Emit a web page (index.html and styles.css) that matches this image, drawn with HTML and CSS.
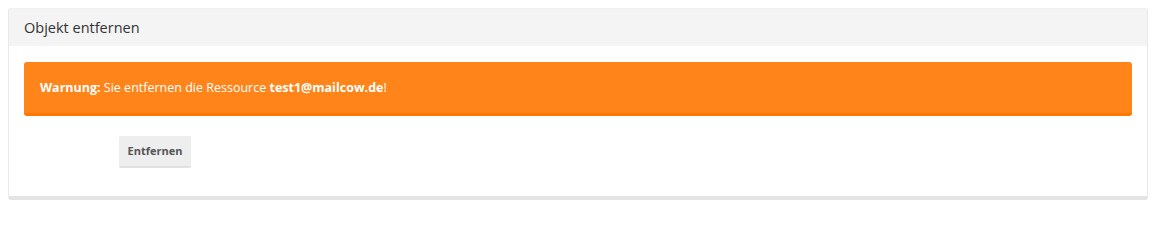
FILE: index.html
```html
<!DOCTYPE html>
<html lang="de">
<head>
<meta charset="utf-8">
<title>Objekt entfernen</title>
<link rel="stylesheet" href="styles.css">
</head>
<body>
<div class="panel">
  <div class="panel-heading">Objekt entfernen</div>
  <div class="panel-body">
    <div class="alert"><b>Warnung:</b> Sie entfernen die Ressource <b>test1@mailcow.de</b>!</div>
    <div class="form-row">
      <button class="btn" type="button">Entfernen</button>
    </div>
  </div>
</div>
</body>
</html>
```
FILE: styles.css
```css
body {
  margin: 8px;
  background: #fff;
  font-family: "Open Sans", "Noto Sans", sans-serif;
  font-size: 13px;
  color: #333;
}
.panel {
  width: 1140px;
  box-sizing: border-box;
  border: 1px solid #e9e9e9;
  border-top-color: #f0f0f0;
  border-bottom: 4px solid #e4e4e4;
  border-radius: 3px;
  background: #fff;
}
.panel-heading {
  height: 37px;
  box-sizing: border-box;
  padding: 9px 15px 0;
  background: #f4f4f4;
  font-size: 14.5px;
  line-height: 20px;
  color: #333;
}
.panel-body {
  padding: 16px 15px 28px;
}
.alert {
  background: #ff851b;
  border-bottom: 3px solid #ff7700;
  border-radius: 3px;
  color: #fff;
  padding: 16px 16px 15px;
  font-size: 12.5px;
  line-height: 20px;
}
.alert b {
  font-weight: 700;
}
.form-row {
  margin-top: 20px;
  padding-left: 95px;
}
.btn {
  width: 72px;
  height: 32px;
  box-sizing: border-box;
  border: none;
  border-bottom: 2px solid #e1e1e1;
  border-radius: 2px;
  background: #eeeeee;
  color: #555;
  font-family: inherit;
  font-size: 11px;
  font-weight: 700;
  padding: 0;
  line-height: 30px;
}
```
